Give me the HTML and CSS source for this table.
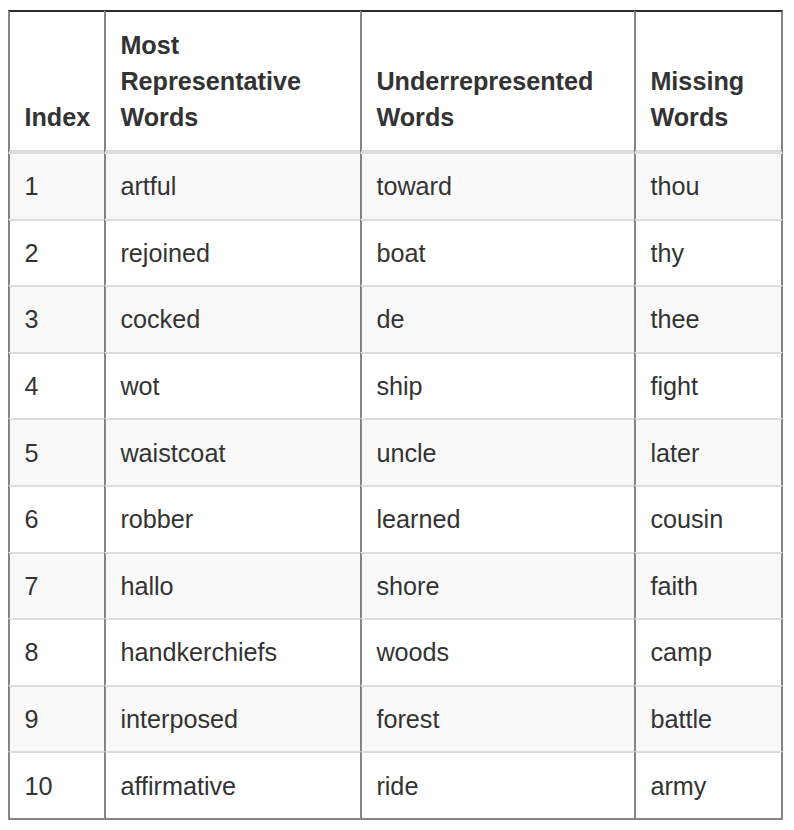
FILE: index.html
```html
<!DOCTYPE html>
<html>
<head>
<meta charset="utf-8">
<link rel="stylesheet" href="styles.css">
</head>
<body>
<table class="words">
  <thead>
    <tr>
      <th class="c1">Index</th>
      <th class="c2">Most Representative Words</th>
      <th class="c3">Underrepresented Words</th>
      <th class="c4">Missing Words</th>
    </tr>
  </thead>
  <tbody>
    <tr><td>1</td><td>artful</td><td>toward</td><td>thou</td></tr>
    <tr><td>2</td><td>rejoined</td><td>boat</td><td>thy</td></tr>
    <tr><td>3</td><td>cocked</td><td>de</td><td>thee</td></tr>
    <tr><td>4</td><td>wot</td><td>ship</td><td>fight</td></tr>
    <tr><td>5</td><td>waistcoat</td><td>uncle</td><td>later</td></tr>
    <tr><td>6</td><td>robber</td><td>learned</td><td>cousin</td></tr>
    <tr><td>7</td><td>hallo</td><td>shore</td><td>faith</td></tr>
    <tr><td>8</td><td>handkerchiefs</td><td>woods</td><td>camp</td></tr>
    <tr><td>9</td><td>interposed</td><td>forest</td><td>battle</td></tr>
    <tr><td>10</td><td>affirmative</td><td>ride</td><td>army</td></tr>
  </tbody>
</table>
</body>
</html>
```
FILE: styles.css
```css
html, body {
  margin: 0;
  padding: 0;
  background: #fff;
}
body {
  font-family: "Liberation Sans", Arial, Helvetica, sans-serif;
  color: #333;
  font-size: 25.2px;
  line-height: 36px;
}
.words {
  margin: 10px 0 0 8px;
  border-collapse: separate;
  border-spacing: 0;
  table-layout: fixed;
  width: 775px;
}
.words th,
.words td {
  box-sizing: border-box;
  text-align: left;
  border-left: 2px solid #858585;
}
.words th:last-child,
.words td:last-child {
  border-right: 2px solid #858585;
}
.words th {
  font-weight: bold;
  vertical-align: bottom;
  padding: 15px 14.4px;
  border-top: 2px solid #2a2a2a;
  border-bottom: 4px solid #dddddd;
}
.words td {
  height: 66.6px;
  padding: 14.3px 14.4px;
  vertical-align: middle;
  border-top: 2px solid #dddddd;
}
.words tbody tr:first-child td {
  height: 64.6px;
  border-top: 0;
}
.words tbody tr:last-child td {
  border-bottom: 2px solid #858585;
}
.words tbody tr:nth-child(odd) td {
  background: #f9f9f9;
}
.c1 { width: 96px; }
.c2 { width: 256px; }
.c3 { width: 274px; }
.c4 { width: 149px; }
```
